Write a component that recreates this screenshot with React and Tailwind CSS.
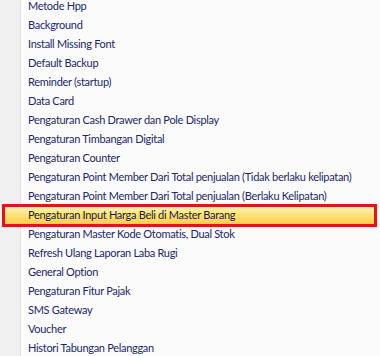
import React from 'react';

const items = [
    'Metode Hpp',
    'Background',
    'Install Missing Font',
    'Default Backup',
    'Reminder (startup)',
    'Data Card',
    'Pengaturan Cash Drawer dan Pole Display',
    'Pengaturan Timbangan Digital',
    'Pengaturan Counter',
    'Pengaturan Point Member Dari Total penjualan (Tidak berlaku kelipatan)',
    'Pengaturan Point Member Dari Total penjualan (Berlaku Kelipatan)',
    'Pengaturan Input Harga Beli di Master Barang',
    'Pengaturan Master Kode Otomatis, Dual Stok',
    'Refresh Ulang Laporan Laba Rugi',
    'General Option',
    'Pengaturan Fitur Pajak',
    'SMS Gateway',
    'Voucher',
    'Histori Tabungan Pelanggan',
];

const ACTIVE = 11;

export default function App() {
    return (
        <div className="relative w-[380px] h-[356px] overflow-hidden bg-[#fbfbfb] font-['Lato','Noto_Sans',sans-serif] text-[11px] tracking-[-0.3px] text-[#1b2768]">
            <div className="absolute left-0 top-0 bottom-0 w-[21px] bg-[#f0f0f0] border-r border-[#e2e2e2]" />
            <div className="absolute left-[22px] top-0 bottom-0 w-px bg-white" />
            <div className="relative -mt-[3px]">
                {items.map((label, i) =>
                    i === ACTIVE ? (
                        <div key={i} className="relative h-[19px] flex items-center">
                            <div className="absolute left-[2px] right-[3px] -top-[2px] -bottom-[2px] border-[3px] border-[#e3121b] bg-[linear-gradient(#fff2b8,#fde27a_45%,#f9cf45)]" />
                            <span className="relative pl-[28px] text-[#1a1a3a]">{label}</span>
                        </div>
                    ) : (
                        <div key={i} className="h-[19px] flex items-center pl-[28px] whitespace-nowrap">
                            {label}
                        </div>
                    )
                )}
            </div>
        </div>
    );
}
